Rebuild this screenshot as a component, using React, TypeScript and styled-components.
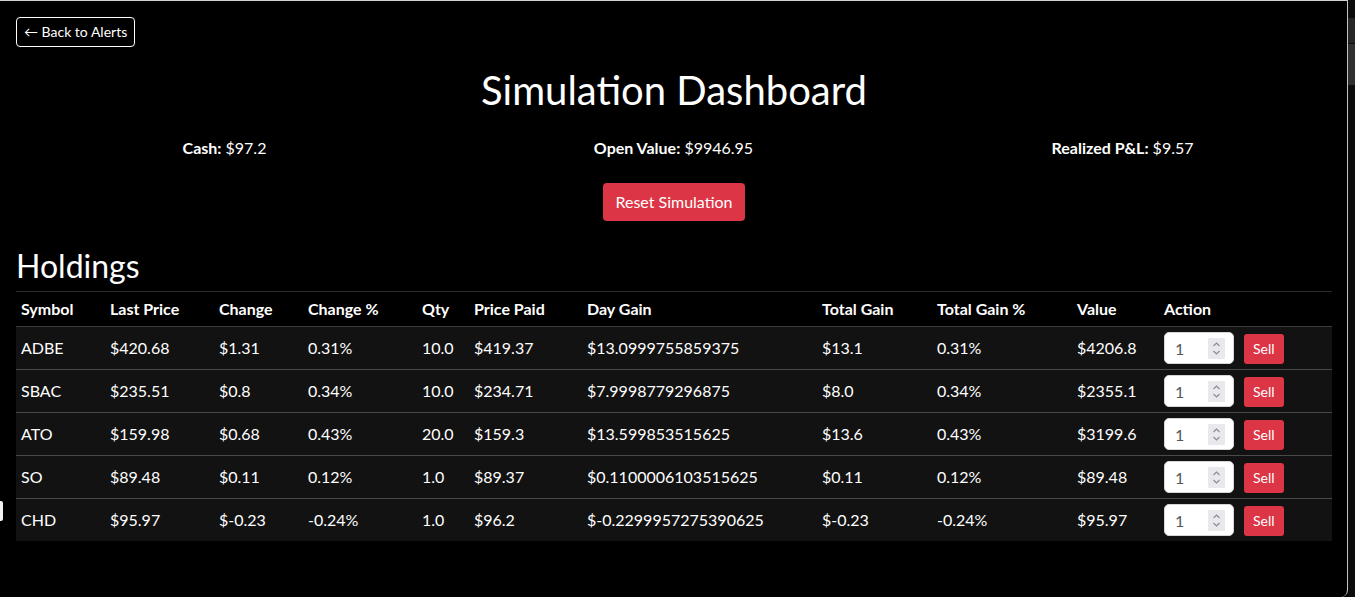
import React from "react";
import styled, { createGlobalStyle } from "styled-components";

const Global = createGlobalStyle`
  html, body { margin: 0; padding: 0; background: #000; overflow: hidden; }
  body { font-family: Lato, "Liberation Sans", sans-serif; color: #fff; }
  * { box-sizing: border-box; }
`;

const Shell = styled.div`
  display: flex;
  width: 1355px;
  height: 597px;
  background: #000;
`;

const Viewport = styled.div`
  position: relative;
  width: 1348px;
  height: 597px;
  border-top: 1px solid #d2d2d2;
  border-right: 1px solid #c4c4c4;
  border-bottom-right-radius: 7px;
  padding: 16px 15px 0 16px;
  overflow: hidden;
`;

const ScrollTrack = styled.div`
  flex: 1;
  display: flex;
  flex-direction: column;
  background: #0c0c0c;
  padding-top: 18px;
  gap: 1px;
`;

const ScrollPiece = styled.div<{ $h: number; $c: string }>`
  height: ${(p) => p.$h}px;
  background: ${(p) => p.$c};
`;

const EdgeMark = styled.div`
  position: absolute;
  left: -2px;
  top: 500px;
  width: 5px;
  height: 20px;
  border-radius: 2px;
  background: #f2f2f2;
`;

const BackButton = styled.button`
  display: inline-block;
  font-family: inherit;
  font-size: 14px;
  line-height: 20px;
  padding: 4px 7px;
  color: #fff;
  background: transparent;
  border: 1px solid #fff;
  border-radius: 4px;
`;

const Title = styled.h1`
  margin: 19px 0 0;
  text-align: center;
  font-size: 40px;
  line-height: 48px;
  font-weight: 400;
`;

const Stats = styled.div`
  display: grid;
  grid-template-columns: repeat(3, 1fr);
  margin: 22px -15px 0 -16px;
  font-size: 16px;
  line-height: 24px;
  text-align: center;
`;

const Stat = styled.div`
  strong { font-weight: 700; }
`;

const ResetRow = styled.div`
  display: flex;
  justify-content: center;
  margin-top: 23px;
`;

const ResetButton = styled.button`
  font-family: inherit;
  font-size: 16px;
  line-height: 24px;
  padding: 7px 12px;
  color: #fff;
  background: #dc3545;
  border: none;
  border-radius: 4px;
`;

const Heading = styled.h2`
  margin: 26px 0 6px;
  font-size: 32px;
  line-height: 38px;
  font-weight: 400;
`;

const Table = styled.table`
  width: 1316px;
  table-layout: fixed;
  border-collapse: collapse;
  font-size: 16px;
  line-height: 24px;
`;

const HeadCell = styled.th`
  text-align: left;
  font-weight: 700;
  padding: 5px 5px;
  border-top: 1px solid #2c2c2c;
  border-bottom: 1px solid #3a3a3a;
  background: #000;
`;

const Row = styled.tr`
  background: #121212;
  & + & td { border-top: 1px solid #4a4a4a; }
`;

const Cell = styled.td`
  padding: 5px 5px;
  white-space: nowrap;
  vertical-align: middle;
`;

const ActionWrap = styled.div`
  display: flex;
  align-items: center;
  gap: 10px;
`;

const QtyBox = styled.label`
  display: flex;
  align-items: center;
  width: 70px;
  height: 32px;
  padding: 0 8px 0 10px;
  background: #fff;
  border: 1px solid #d6d6d6;
  border-radius: 5px;
`;

const QtyInput = styled.input`
  flex: 1;
  min-width: 0;
  border: none;
  outline: none;
  padding: 0;
  font-family: inherit;
  font-size: 16px;
  color: #555;
  background: transparent;
`;

const Spinner = styled.svg`
  flex: none;
  display: block;
`;

const SellButton = styled.button`
  font-family: inherit;
  font-size: 14px;
  line-height: 20px;
  padding: 5px 9px;
  height: 30px;
  margin-top: 2px;
  color: #fff;
  background: #dc3545;
  border: none;
  border-radius: 3px;
`;

const widths = [89, 109, 89, 114, 52, 113, 235, 115, 140, 87, 173];
const headers = [
  "Symbol", "Last Price", "Change", "Change %", "Qty", "Price Paid",
  "Day Gain", "Total Gain", "Total Gain %", "Value", "Action",
];

const rows = [
  ["ADBE", "$420.68", "$1.31", "0.31%", "10.0", "$419.37", "$13.0999755859375", "$13.1", "0.31%", "$4206.8"],
  ["SBAC", "$235.51", "$0.8", "0.34%", "10.0", "$234.71", "$7.9998779296875", "$8.0", "0.34%", "$2355.1"],
  ["ATO", "$159.98", "$0.68", "0.43%", "20.0", "$159.3", "$13.599853515625", "$13.6", "0.43%", "$3199.6"],
  ["SO", "$89.48", "$0.11", "0.12%", "1.0", "$89.37", "$0.1100006103515625", "$0.11", "0.12%", "$89.48"],
  ["CHD", "$95.97", "$-0.23", "-0.24%", "1.0", "$96.2", "$-0.2299957275390625", "$-0.23", "-0.24%", "$95.97"],
];

const SpinIcon = () => (
  <Spinner width="17" height="21" viewBox="0 0 17 21">
    <rect x="0" y="0" width="17" height="21" rx="1" fill="#e9e9ed" />
    <path d="M5.5 8 L8.5 5 L11.5 8" fill="none" stroke="#8a8a8a" strokeWidth="1.1" />
    <path d="M5.5 13 L8.5 16 L11.5 13" fill="none" stroke="#8a8a8a" strokeWidth="1.1" />
  </Spinner>
);

export default function App() {
  return (
    <>
      <Global />
      <Shell>
        <Viewport>
          <EdgeMark />
          <BackButton>← Back to Alerts</BackButton>
          <Title>Simulation Dashboard</Title>
          <Stats>
            <Stat><strong>Cash:</strong> $97.2</Stat>
            <Stat><strong>Open Value:</strong> $9946.95</Stat>
            <Stat><strong>Realized P&amp;L:</strong> $9.57</Stat>
          </Stats>
          <ResetRow>
            <ResetButton>Reset Simulation</ResetButton>
          </ResetRow>
          <Heading>Holdings</Heading>
          <Table>
            <colgroup>
              {widths.map((w, i) => (
                <col key={i} style={{ width: w }} />
              ))}
            </colgroup>
            <thead>
              <tr>
                {headers.map((h) => (
                  <HeadCell key={h}>{h}</HeadCell>
                ))}
              </tr>
            </thead>
            <tbody>
              {rows.map((r) => (
                <Row key={r[0]}>
                  {r.map((c, i) => (
                    <Cell key={i}>{c}</Cell>
                  ))}
                  <Cell>
                    <ActionWrap>
                      <QtyBox>
                        <QtyInput type="text" defaultValue="1" />
                        <SpinIcon />
                      </QtyBox>
                      <SellButton>Sell</SellButton>
                    </ActionWrap>
                  </Cell>
                </Row>
              ))}
            </tbody>
          </Table>
        </Viewport>
        <ScrollTrack>
          <ScrollPiece $h={25} $c="#262626" />
          <ScrollPiece $h={41} $c="#303030" />
        </ScrollTrack>
      </Shell>
    </>
  );
}
